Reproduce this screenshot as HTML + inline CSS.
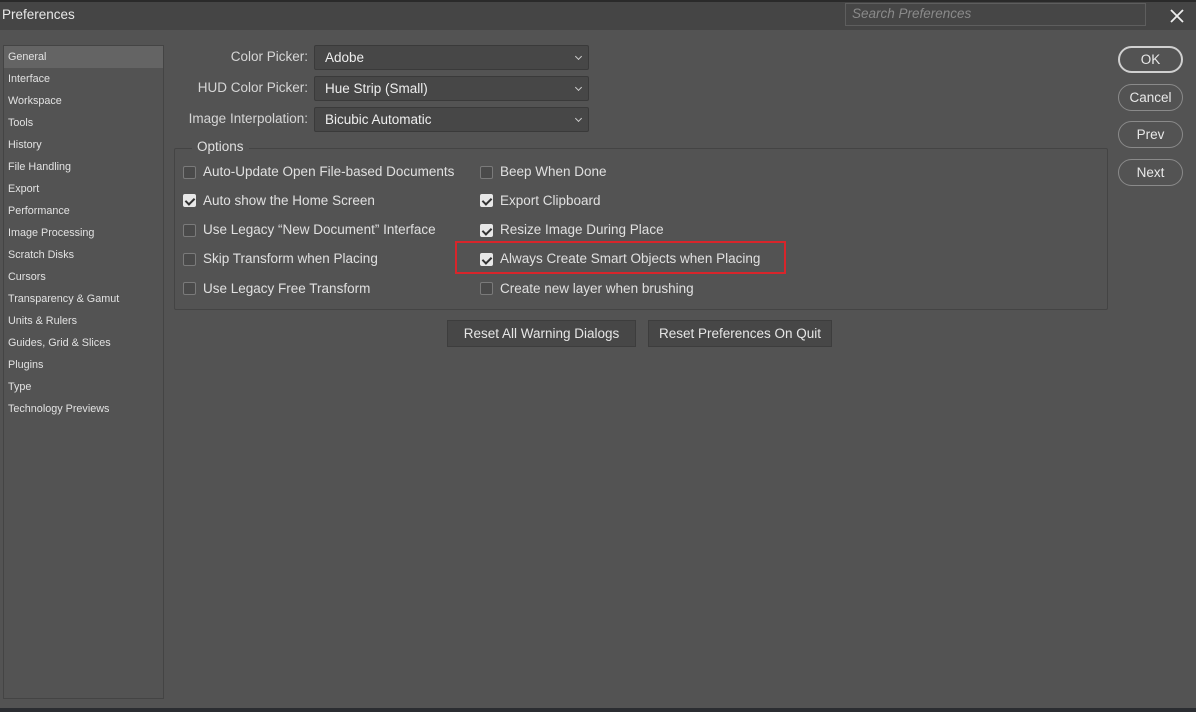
<!DOCTYPE html>
<html><head><style>
*{box-sizing:border-box;margin:0;padding:0}
body{width:1196px;height:712px;background:#535353;font-family:"Liberation Sans","DejaVu Sans",sans-serif;color:#e0e0e0;position:relative;overflow:hidden}
.a{position:absolute}
.title{left:0;top:0;width:1196px;height:30px;background:#454545;border-top:2px solid #2a2a2a}
.side{left:3px;top:45px;width:161px;height:654px;border:1px solid #444;background:#535353}
.side div{height:22px;line-height:22px;padding-left:4px;font-size:10.8px;color:#e2e2e2}
.side .sel{background:#646464}
.lbl{font-size:13.5px;color:#d6d6d6;text-align:right;width:130px}
.dd{left:314px;width:275px;height:25px;background:#474747;border:1px solid #3a3a3a;border-radius:2px;font-size:13.5px;line-height:23px;padding-left:10px;color:#eee}
.dd:after{content:"";position:absolute;right:7px;top:8px;width:4px;height:4px;border-right:1px solid #ccc;border-bottom:1px solid #ccc;transform:rotate(45deg)}
.grp{left:174px;top:148px;width:934px;height:162px;border:1px solid #444;border-radius:2px}
.cb{width:13px;height:13px;border:1px solid #7a7a7a;border-radius:2px;background:#4a4a4a}
.cb.on{background:#e8e8e8;border-color:#e8e8e8}
.cb.on:after{content:"";position:absolute;left:3px;top:1px;width:4px;height:7px;border-right:2px solid #333;border-bottom:2px solid #333;transform:rotate(45deg)}
.t{font-size:13.5px;color:#e0e0e0;white-space:nowrap}
.btn{height:27px;background:#474747;border:1px solid #3d3d3d;font-size:13.5px;line-height:25px;text-align:center;color:#e6e6e6}
.rb{left:1118px;width:65px;height:27px;border:1px solid #8a8a8a;border-radius:14px;font-size:13.5px;line-height:25px;text-align:center;color:#e8e8e8}
</style></head><body>
<div class="a title"></div>
<div class="a" style="left:2px;top:7px;font-size:13.5px;color:#e8e8e8">Preferences</div>
<div class="a" style="left:845px;top:3px;width:301px;height:23px;border:1px solid #5e5e5e;background:#464646;font-size:13.5px;font-style:italic;color:#8a8a8a;padding:2px 6px">Search Preferences</div>
<svg class="a" style="left:1170px;top:9px" width="14" height="14"><path d="M1 1L13 13M13 1L1 13" stroke="#eee" stroke-width="1.8"/></svg>
<div class="a side">
<div class="sel">General</div><div>Interface</div><div>Workspace</div><div>Tools</div><div>History</div><div>File Handling</div><div>Export</div><div>Performance</div><div>Image Processing</div><div>Scratch Disks</div><div>Cursors</div><div>Transparency &amp; Gamut</div><div>Units &amp; Rulers</div><div>Guides, Grid &amp; Slices</div><div>Plugins</div><div>Type</div><div>Technology Previews</div>
</div>
<div class="a lbl" style="left:178px;top:49px">Color Picker:</div>
<div class="a lbl" style="left:178px;top:80px">HUD Color Picker:</div>
<div class="a lbl" style="left:178px;top:111px">Image Interpolation:</div>
<div class="a dd" style="top:45px">Adobe</div>
<div class="a dd" style="top:76px">Hue Strip (Small)</div>
<div class="a dd" style="top:107px">Bicubic Automatic</div>
<div class="a grp"></div>
<div class="a t" style="left:192px;top:139px;background:#535353;padding:0 5px">Options</div>
<div class="a cb" style="left:183px;top:166px"></div><div class="a t" style="left:203px;top:164px">Auto-Update Open File-based Documents</div>
<div class="a cb on" style="left:183px;top:194px"></div><div class="a t" style="left:203px;top:193px">Auto show the Home Screen</div>
<div class="a cb" style="left:183px;top:224px"></div><div class="a t" style="left:203px;top:222px">Use Legacy “New Document” Interface</div>
<div class="a cb" style="left:183px;top:253px"></div><div class="a t" style="left:203px;top:251px">Skip Transform when Placing</div>
<div class="a cb" style="left:183px;top:282px"></div><div class="a t" style="left:203px;top:281px">Use Legacy Free Transform</div>
<div class="a cb" style="left:480px;top:166px"></div><div class="a t" style="left:500px;top:164px">Beep When Done</div>
<div class="a cb on" style="left:480px;top:194px"></div><div class="a t" style="left:500px;top:193px">Export Clipboard</div>
<div class="a cb on" style="left:480px;top:224px"></div><div class="a t" style="left:500px;top:222px">Resize Image During Place</div>
<div class="a cb on" style="left:480px;top:253px"></div><div class="a t" style="left:500px;top:251px">Always Create Smart Objects when Placing</div>
<div class="a cb" style="left:480px;top:282px"></div><div class="a t" style="left:500px;top:281px">Create new layer when brushing</div>
<div class="a" style="left:455px;top:241px;width:331px;height:33px;border:2px solid #d8252b"></div>
<div class="a btn" style="left:447px;top:320px;width:189px">Reset All Warning Dialogs</div>
<div class="a btn" style="left:648px;top:320px;width:184px">Reset Preferences On Quit</div>
<div class="a rb" style="top:46px;border:2px solid #d0d0d0;line-height:23px">OK</div>
<div class="a rb" style="top:84px">Cancel</div>
<div class="a rb" style="top:121px">Prev</div>
<div class="a rb" style="top:159px">Next</div>
<div class="a" style="left:0;top:708px;width:1196px;height:4px;background:#2b2d31"></div>
</body></html>
